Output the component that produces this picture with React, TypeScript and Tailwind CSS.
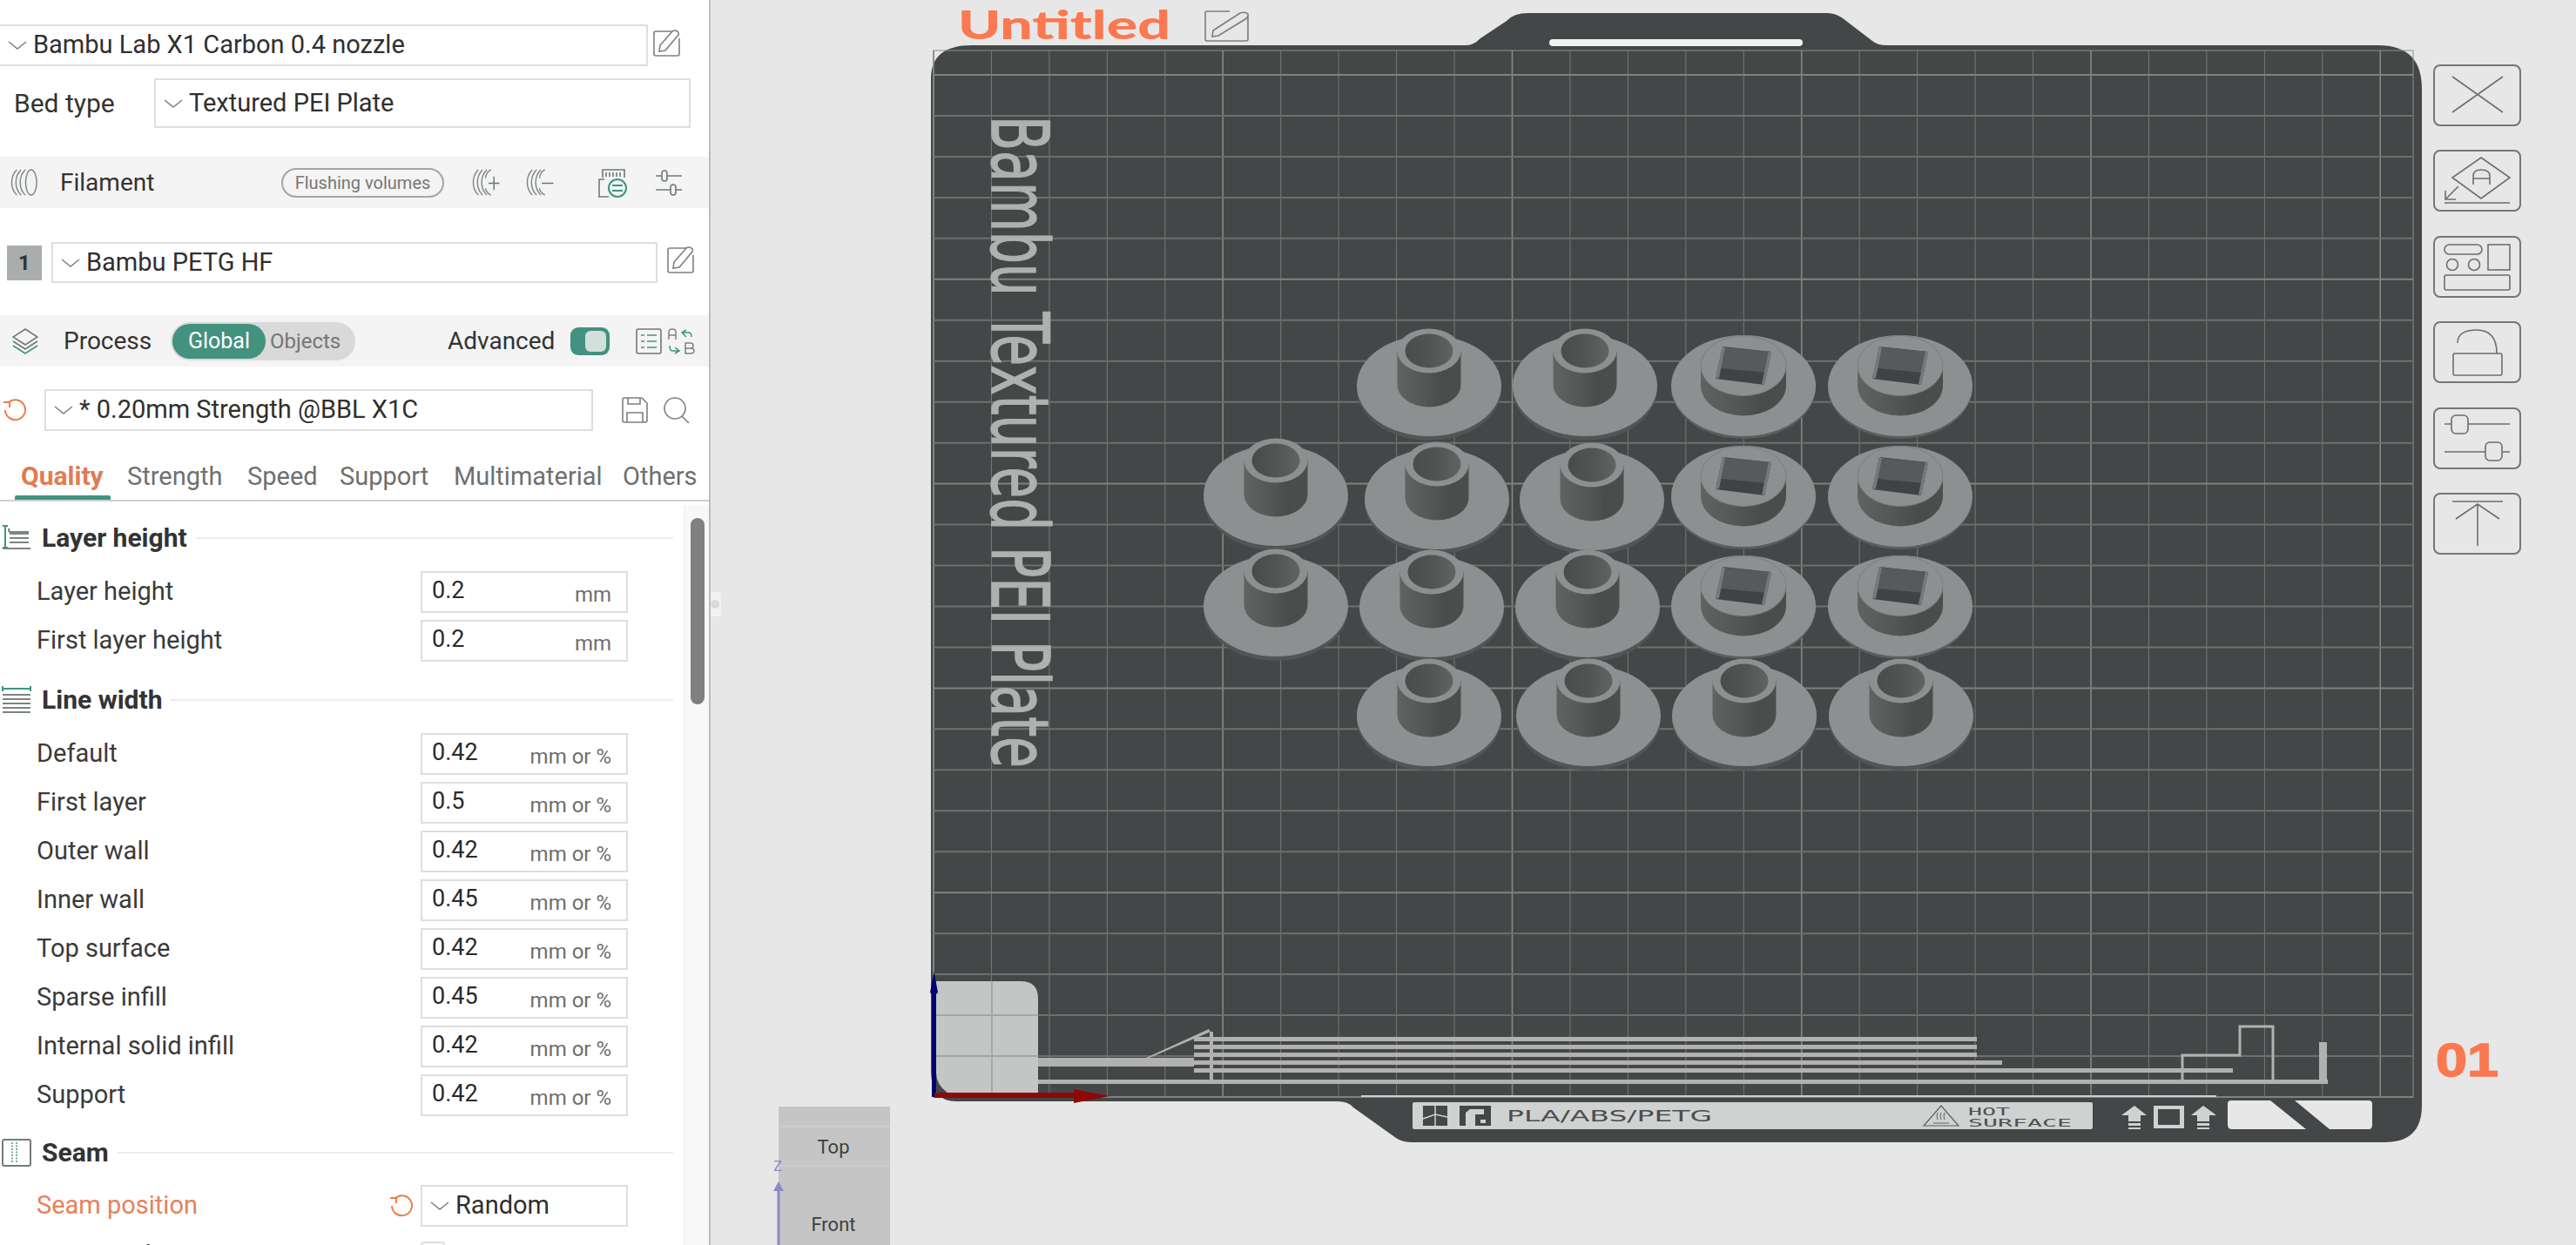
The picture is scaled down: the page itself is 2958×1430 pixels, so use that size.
import { Fragment } from 'react';

const SANS = "font-['Roboto','Noto_Sans',sans-serif]";

function Chevron({ className = '' }: { className?: string }) {
  return (
    <svg viewBox="0 0 22 12" className={`w-[22px] h-[12px] shrink-0 ${className}`} fill="none" stroke="#7d7d7d" strokeWidth="1.5">
      <path d="M1 2 L11 10 L21 2" />
    </svg>
  );
}

function Combo({ label, className = '' }: { label: string; className?: string }) {
  return (
    <div className={`flex items-center border-2 border-[#dedede] bg-white text-[29px] text-[#2f2f2f] ${className}`}>
      <Chevron className="ml-[9px] mr-[7px]" />
      <span className="whitespace-nowrap">{label}</span>
    </div>
  );
}

function EditIcon({ className = '' }: { className?: string }) {
  return (
    <svg viewBox="0 0 32 32" className={`w-[32px] h-[32px] shrink-0 ${className}`} fill="none" stroke="#7f7f7f" strokeWidth="1.6">
      <path d="M22 2 H3 Q1 2 1 4 V28 Q1 30 3 30 H28 Q30 30 30 28 V10" />
      <path d="M8 18 L22 2 Q25 0 28 2 Q30 4 29 6 L14 24 L7 25 Z" />
    </svg>
  );
}

function UndoIcon({ className = '' }: { className?: string }) {
  return (
    <svg viewBox="0 0 28 28" className={className} fill="none" stroke="#ef7b45" strokeWidth="2">
      <path d="M7 5 A11.5 11.5 0 1 1 3 14" />
      <path d="M1 5 H8 V11" />
    </svg>
  );
}

// three filament rings, optional sign on the right
function SpoolIcon({ plus, minus }: { plus?: boolean; minus?: boolean }) {
  const sign = plus || minus;
  return (
    <svg viewBox="0 0 32 34" className="w-[32px] h-[33px]" fill="none" stroke="#7c8785" strokeWidth="1.5">
      <path d="M7 2 Q1 8 1 17 Q1 26 7 32" />
      <path d="M12 2 Q6 8 6 17 Q6 26 12 32" />
      <path d="M17 2 Q11 8 11 17 Q11 26 17 32" />
      {sign ? (
        <path d="M22 2 Q16 5 15.5 12 M22 32 Q16 29 15.5 24" />
      ) : (
        <ellipse cx="24" cy="17" rx="6.5" ry="15" />
      )}
      {plus && <path d="M19 18 H32 M25.5 10 V26" stroke="#6a7775" />}
      {minus && <path d="M18 18 H32" stroke="#6a7775" />}
    </svg>
  );
}

function SectionTitle({ title, icon, className = '' }: { title: string; icon: 'layer' | 'line' | 'seam'; className?: string }) {
  return (
    <div className={`flex items-center h-[36px] ${className}`}>
      <div className="w-[48px] pl-[2px] shrink-0">
        {icon === 'layer' && (
          <svg viewBox="0 0 34 30" className="w-[34px] h-[30px]" fill="none">
            <path d="M9 4 Q7 6 9 8 H31 M9 10 H31 M9 15 H31 M9 20 H31 M1 27 H33" stroke="#7d8482" strokeWidth="2" />
            <path d="M1 1 H7 M4 1 V26 M1 26 H7" stroke="#3e9580" strokeWidth="2" />
          </svg>
        )}
        {icon === 'line' && (
          <svg viewBox="0 0 34 32" className="w-[34px] h-[32px]" fill="none">
            <path d="M1 10 H33 M1 15 H33 M1 20 H33 M1 25 H33 M1 30 H33" stroke="#7d8482" strokeWidth="2" />
            <path d="M1 0 V6 M1 3 H33 M33 0 V6" stroke="#3e9580" strokeWidth="2" />
          </svg>
        )}
        {icon === 'seam' && (
          <svg viewBox="0 0 34 32" className="w-[34px] h-[32px]" fill="none">
            <rect x="1" y="1" width="32" height="30" rx="2" stroke="#737b79" strokeWidth="2" />
            <path d="M12 4 V28 M17 4 V28" stroke="#3e9580" strokeWidth="1.5" strokeDasharray="2 1.5" />
          </svg>
        )}
      </div>
      <span className="text-[30px] font-bold text-[#333] whitespace-nowrap leading-none">{title}</span>
      <div className="ml-[10px] flex-1 h-[2px] bg-[#ececec] mr-[41px]" />
    </div>
  );
}

function SettingRow({ label, value, unit }: { label: string; value: string; unit: string }) {
  return (
    <div className="flex items-center h-[48px] mb-[8px] pl-[42px]">
      <span className="w-[441px] text-[29px] text-[#3a3a3a] whitespace-nowrap">{label}</span>
      <div className="flex items-center justify-between w-[238px] h-[48px] border-2 border-[#dedede] pl-[11px] pr-[17px]">
        <span className="text-[27px] text-[#2a2a2a] -mt-[4px]">{value}</span>
        <span className="text-[24px] text-[#6e6e6e] mt-[5px]">{unit}</span>
      </div>
    </div>
  );
}

const TABS = [
  { name: 'Strength', w: 'w-[138px]' },
  { name: 'Speed', w: 'w-[106px]' },
  { name: 'Support', w: 'w-[131px]' },
  { name: 'Multimaterial', w: 'w-[194px]' },
  { name: 'Others', w: 'w-[90px]' },
];

const SETTINGS: { title: string; icon: 'layer' | 'line'; unit: string; rows: [string, string][] }[] = [
  { title: 'Layer height', icon: 'layer', unit: 'mm', rows: [['Layer height', '0.2'], ['First layer height', '0.2']] },
  {
    title: 'Line width',
    icon: 'line',
    unit: 'mm or %',
    rows: [
      ['Default', '0.42'],
      ['First layer', '0.5'],
      ['Outer wall', '0.42'],
      ['Inner wall', '0.45'],
      ['Top surface', '0.42'],
      ['Sparse infill', '0.45'],
      ['Internal solid infill', '0.42'],
      ['Support', '0.42'],
    ],
  },
];

function LeftPanel() {
  return (
    <div className={`relative w-[816px] h-full shrink-0 bg-white border-r-2 border-[#bcbcbc] overflow-hidden ${SANS}`}>
      <div className="pt-[28px]">
        <div className="flex items-center h-[48px]">
          <Combo label="Bambu Lab X1 Carbon 0.4 nozzle" className="w-[744px] h-[48px] border-l-0 pl-0" />
          <EditIcon className="ml-[6px] -mt-[4px]" />
        </div>
        <div className="flex items-center h-[57px] mt-[14px]">
          <span className="w-[177px] pl-[16px] text-[30px] text-[#333]">Bed type</span>
          <Combo label="Textured PEI Plate" className="w-[616px] h-[57px]" />
        </div>
      </div>

      <div className="flex items-center h-[59px] mt-[33px] bg-[#f4f4f4] pl-[12px]">
        <SpoolIcon />
        <span className="ml-[25px] w-[254px] text-[28px] text-[#333]">Filament</span>
        <div className="flex items-center justify-center w-[187px] h-[34px] rounded-full border-2 border-[#a5a5a5] text-[20px] text-[#767676] leading-none">
          Flushing volumes
        </div>
        <div className="ml-[32px]"><SpoolIcon plus /></div>
        <div className="ml-[30px]"><SpoolIcon minus /></div>
        <svg viewBox="0 0 34 34" className="ml-[50px] w-[34px] h-[34px]" fill="none" stroke="#6f7a78" strokeWidth="1.6">
          <path d="M6 11 V2 H31 V11 M10 5 V10 M14 5 V10 M18 5 V10 M22 5 V10 M26 5 V10" />
          <path d="M8 13 H2 V33 H13" />
          <circle cx="23" cy="23" r="10" stroke="#3e9580" strokeWidth="2" />
          <path d="M17 20 H29 M17 26 H29" stroke="#3e9580" strokeWidth="2" />
        </svg>
        <svg viewBox="0 0 32 34" className="ml-[32px] w-[32px] h-[34px]" fill="none" stroke="#6f7a78" strokeWidth="1.6">
          <path d="M1 9 H8 M14 9 H31 M1 25 H18 M24 25 H31" />
          <rect x="8" y="3" width="6" height="12" rx="3" />
          <rect x="18" y="19" width="6" height="12" rx="3" />
        </svg>
      </div>

      <div className="flex items-center h-[47px] mt-[39px]">
        <div className="ml-[8px] w-[40px] h-[40px] bg-[#a9adad] flex items-center justify-center text-[24px] font-bold text-[#333]">1</div>
        <Combo label="Bambu PETG HF" className="ml-[11px] w-[696px] h-[47px]" />
        <EditIcon className="ml-[11px] -mt-[6px]" />
      </div>

      <div className="flex items-center h-[59px] mt-[37px] bg-[#f4f4f4] pl-[14px]">
        <svg viewBox="0 0 30 30" className="w-[30px] h-[30px]" fill="none" stroke="#6f7a78" strokeWidth="1.6">
          <path d="M15 1 L29 10 L15 19 L1 10 Z" />
          <path d="M1 15 L15 24 L29 15" />
          <path d="M1 20 L15 29 L29 20" stroke="#3e9580" />
        </svg>
        <span className="ml-[29px] w-[123px] text-[28px] text-[#333]">Process</span>
        <div className="flex items-center w-[212px] h-[44px] rounded-full bg-[#d9d9d9] pl-[2px]">
          <div className="flex items-center justify-center w-[107px] h-[40px] rounded-full bg-[#43917f] text-[25px] text-white">Global</div>
          <span className="ml-[5px] text-[24px] text-[#757575]">Objects</span>
        </div>
        <span className="ml-[106px] w-[141px] text-[28px] text-[#333]">Advanced</span>
        <div className="flex items-center justify-end w-[45px] h-[32px] rounded-[9px] bg-[#43917f] pr-[4px]">
          <div className="w-[24px] h-[24px] rounded-[6px] bg-[#d3dfdb]" />
        </div>
        <svg viewBox="0 0 30 30" className="ml-[30px] w-[30px] h-[30px]" fill="none" stroke="#6f7a78" strokeWidth="1.6">
          <rect x="1" y="1" width="28" height="28" rx="2" />
          <path d="M6 8 H10 M6 15 H10 M6 22 H10 M13 8 H24 M13 15 H24 M13 22 H24" stroke="#3e9580" />
        </svg>
        <svg viewBox="0 0 32 30" className="ml-[6px] w-[32px] h-[30px]" fill="none" stroke="#7a8280" strokeWidth="1.5">
          <path d="M2 13 V4 Q2 1 6 1 Q10 1 10 4 V13 M2 8 H10" />
          <path d="M22 10 L17 5 L22 2 M17 5 H25 Q28 5 28 10" stroke="#3e9580" />
          <path d="M9 22 L14 26 L9 29 M14 26 H6 Q3 26 3 20" stroke="#3e9580" />
          <path d="M21 17 H27 Q30 17 30 20 Q30 23 27 23 H21 Z M27 23 Q31 23 31 26 Q31 29 27 29 H21 V23" />
        </svg>
      </div>

      <div className="flex items-center h-[48px] mt-[26px]">
        <UndoIcon className="ml-[3px] w-[28px] h-[28px]" />
        <Combo label="* 0.20mm Strength @BBL X1C" className="ml-[20px] w-[630px] h-[48px]" />
        <svg viewBox="0 0 30 30" className="ml-[33px] w-[30px] h-[30px]" fill="none" stroke="#7f7f7f" strokeWidth="1.6">
          <path d="M1 3 Q1 1 3 1 H23 L29 7 V27 Q29 29 27 29 H3 Q1 29 1 27 Z" />
          <path d="M7 1 V8 H21 V1 M6 29 V18 H24 V29" />
        </svg>
        <svg viewBox="0 0 30 30" className="ml-[18px] w-[30px] h-[30px]" fill="none" stroke="#7f7f7f" strokeWidth="1.6">
          <circle cx="13" cy="13" r="12" />
          <path d="M21 22 L29 30" />
        </svg>
      </div>

      <div className="relative flex items-end h-[81px] pl-[24px] pb-[5px] border-b-2 border-[#d0d0d0] text-[29px] text-[#6f6f6f] whitespace-nowrap">
        <span className="w-[122px] text-[30px] font-bold text-[#e07b52]">Quality</span>
        {TABS.map((t) => (
          <span key={t.name} className={t.w}>{t.name}</span>
        ))}
        <div className="absolute left-[17px] bottom-0 w-[110px] h-[5px] rounded-t-[2px] bg-[#3e9580]" />
      </div>

      <div className="pt-[24px]">
        {SETTINGS.map((s, i) => (
          <Fragment key={s.title}>
            <SectionTitle title={s.title} icon={s.icon} className={i > 0 ? 'mt-[26px]' : ''} />
            <div className="mt-[20px]">
              {s.rows.map(([label, value]) => (
                <SettingRow key={label} label={label} value={value} unit={s.unit} />
              ))}
            </div>
          </Fragment>
        ))}
        <SectionTitle title="Seam" icon="seam" className="mt-[24px]" />
        <div className="flex items-center h-[48px] mt-[19px] pl-[42px]">
          <span className="w-[405px] text-[29px] text-[#e8815a]">Seam position</span>
          <UndoIcon className="w-[28px] h-[28px] mr-[8px]" />
          <Combo label="Random" className="w-[238px] h-[48px]" />
        </div>
        <div className="flex items-start h-[48px] mt-[17px] pl-[42px]">
          <span className="w-[441px] text-[29px] leading-[30px] text-[#3a3a3a] whitespace-nowrap">Staggered inner seams</span>
          <div className="w-[28px] h-[28px] border-2 border-[#dedede] rounded-[4px]" />
        </div>
      </div>

      {/* scroll track */}
      <div className="absolute right-0 top-[580px] bottom-0 w-[29px] bg-[#f8f8f8] border-l border-[#f0f0f0]">
        <div className="ml-[7px] mt-[15px] w-[16px] h-[214px] rounded-full bg-[#808080]" />
      </div>
    </div>
  );
}

// bed drawing uses page coordinates via viewBox
const GRID_X = Array.from({ length: 26 }, (_, i) => 1072 + i * 66.45);
const GRID_Y = Array.from({ length: 26 }, (_, i) => 86 + i * 46.96);

const PLATE_PATH =
  'M1116 52 H1684 Q1692 52 1700 44 L1730 24 Q1738 15 1755 15 H2098 Q2108 15 2116 21 L2150 47 Q2156 52 2166 52 H2731 Q2781 52 2781 102 V1270 Q2781 1312 2738 1312 H1622 Q1610 1312 1603 1307 L1554 1272 Q1548 1265 1536 1265 H1098 Q1069 1265 1069 1230 V90 Q1069 52 1116 52 Z';

function RoundPart({ x, y }: { x: number; y: number }) {
  return (
    <g transform={`translate(${x} ${y})`}>
      <ellipse cx="0" cy="4" rx="83" ry="59" fill="#525555" />
      <ellipse cx="0" cy="0" rx="83" ry="58" fill="#8c9090" />
      <path d="M-36.5 -40 V-1 A36.5 25.5 0 0 0 36.5 -1 V-40 Z" fill="url(#wall)" />
      <ellipse cx="0" cy="-40" rx="36.5" ry="25.5" fill="#8c9090" />
      <ellipse cx="0" cy="-40" rx="27.5" ry="19.5" fill="url(#hole)" />
    </g>
  );
}

function SquarePart({ x, y }: { x: number; y: number }) {
  return (
    <g transform={`translate(${x} ${y})`}>
      <ellipse cx="0" cy="2" rx="83" ry="59" fill="#5b5e5e" />
      <ellipse cx="0" cy="0" rx="83" ry="58" fill="#8c9090" />
      <path d="M-49 -23 V0 A49 34.5 0 0 0 49 0 V-23 Z" fill="url(#wall)" />
      <ellipse cx="0" cy="-23" rx="49" ry="34.5" fill="#8c9090" stroke="#7a7e7e" strokeWidth="1" />
      <polygon points="-24,-45 32,-39 24,-1 -32,-8" fill="#404344" />
      <polygon points="-21,-44 32,-39 27,-15 -26,-20" fill="#57595b" />
      <polygon points="-24,-45 -21,-44 -28,-9 -32,-8" fill="#777a7a" />
      <polygon points="32,-39 24,-1 21,-2 29,-39" fill="#777a7a" />
    </g>
  );
}

const ROUND_PARTS = [
  [1641, 443], [1820, 443],
  [1465, 569], [1650, 573], [1828, 574],
  [1465, 696], [1644, 697], [1823, 697],
  [1641, 822], [1824, 822], [2003, 822], [2183, 822],
];
const SQUARE_PARTS = [
  [2002, 443], [2182, 443],
  [2002, 570], [2182, 570],
  [2002, 696], [2182, 696],
];

function BedScene() {
  return (
    <svg viewBox="816 0 2142 1430" className="absolute inset-0 w-[2142px] h-[1430px]">
      <defs>
        <linearGradient id="wall" x1="0" x2="1" y1="0" y2="0">
          <stop offset="0" stopColor="#616363" />
          <stop offset="0.45" stopColor="#545656" />
          <stop offset="0.7" stopColor="#4a4c4c" />
          <stop offset="1" stopColor="#4c4e4e" />
        </linearGradient>
        <linearGradient id="hole" x1="0" x2="1" y1="0" y2="0">
          <stop offset="0" stopColor="#4a4c4c" />
          <stop offset="0.5" stopColor="#525454" />
          <stop offset="1" stopColor="#626464" />
        </linearGradient>
      </defs>

      <text x="1100" y="45" fontFamily="'Lato','Noto Sans',sans-serif" fontSize="46" fontWeight="900" fill="#fb7850" textLength="244" lengthAdjust="spacingAndGlyphs">Untitled</text>
      <g fill="none" stroke="#7c7c7c" strokeWidth="1.6">
        <path d="M1412 13 H1386 Q1384 13 1384 15 V45 Q1384 47 1386 47 H1431 Q1433 47 1433 45 V19" />
        <path d="M1393 35 L1424 15 Q1430 13 1433 16 Q1434 19 1430 22 L1399 41 L1392 42 Z" />
      </g>

      <path d={PLATE_PATH} fill="#434747" />
      <rect x="1779" y="45" width="291" height="8" rx="4" fill="#f1f1f1" />
      <rect x="1072" y="58" width="1699" height="1202" fill="none" stroke="#8d918e" strokeWidth="1" />
      {GRID_X.map((x, i) => (
        <line key={x} x1={x} x2={x} y1="58" y2="1260" stroke={i % 5 === 0 ? '#858a87' : '#767a78'} strokeWidth={i % 5 === 0 ? 1.6 : 1} />
      ))}
      {GRID_Y.map((y, i) => (
        <line key={y} x1="1072" x2="2771" y1={y} y2={y} stroke={i % 5 === 0 ? '#7f8380' : '#6c706e'} strokeWidth="2" />
      ))}

      {/* rotated plate label */}
      <text transform="translate(1139 133) rotate(90)" fontFamily="'DejaVu Sans',sans-serif" fontSize="90" fill="#afb1ae" stroke="#afb1ae" strokeWidth="1.5" textLength="749" lengthAdjust="spacingAndGlyphs">
        Bambu Textured PEI Plate
      </text>

      {/* excluded area + purge lines */}
      <path d="M1075 1127 H1172 Q1192 1127 1192 1147 V1255 H1088 Q1075 1246 1075 1232 Z" fill="#c4c6c5" />
      <line x1="1139" x2="1139" y1="1127" y2="1255" stroke="#9a9c9b" strokeWidth="1.5" />
      <line x1="1075" x2="1192" y1="1166" y2="1166" stroke="#a4a6a5" strokeWidth="2" />
      <line x1="1075" x2="1192" y1="1213" y2="1213" stroke="#a4a6a5" strokeWidth="2" />
      <g fill="#b1b2b0">
        <rect x="1192" y="1215" width="179" height="10" />
        <rect x="1192" y="1240" width="1481" height="5" />
        <rect x="1371" y="1191" width="899" height="5" />
        <rect x="1371" y="1200" width="899" height="5" />
        <rect x="1371" y="1209" width="899" height="5" />
        <rect x="1371" y="1218" width="928" height="5" />
        <rect x="1371" y="1227" width="1193" height="5" />
        <rect x="1389" y="1185" width="4" height="56" />
        <rect x="2663" y="1197" width="9" height="47" />
        <polygon points="1316,1215 1320,1215 1390,1185 1388,1182" />
      </g>
      <path d="M2506 1240 V1212 H2572 V1179 H2610 V1240" fill="none" stroke="#b1b2b0" strokeWidth="3" />
      <line x1="1563" x2="2545" y1="1259" y2="1259" stroke="#cfd1d0" strokeWidth="2" />

      {ROUND_PARTS.map(([x, y]) => <RoundPart key={`${x}-${y}`} x={x} y={y} />)}
      {SQUARE_PARTS.map(([x, y]) => <SquarePart key={`${x}-${y}`} x={x} y={y} />)}

      {/* axes */}
      <rect x="1070" y="1140" width="5" height="120" fill="#00006e" />
      <polygon points="1072.5,1116 1068,1140 1072.5,1144 1077,1140" fill="#00006e" />
      <rect x="1073" y="1255" width="160" height="6" fill="#8e0808" />
      <polygon points="1233,1251 1274,1259 1233,1267" fill="#8e0808" />

      {/* plate label strip */}
      <rect x="1622" y="1266" width="781" height="31" fill="#d0d2d1" rx="2" />
      <rect x="1634" y="1270" width="28" height="23" fill="#434747" />
      <path d="M1648 1270 V1293 M1634 1285 L1648 1280 L1662 1283" fill="none" stroke="#d0d2d1" strokeWidth="1.5" />
      <rect x="1676" y="1270" width="36" height="23" fill="#434747" />
      <path d="M1683 1293 V1278 L1688 1274 H1704 V1280 H1694 V1293 Z" fill="#d0d2d1" />
      <rect x="1700" y="1286" width="6" height="4" fill="#d0d2d1" />
      <text x="1730" y="1288" fontFamily="'DejaVu Sans',sans-serif" fontSize="18" fill="#4a4d4d" textLength="236" lengthAdjust="spacingAndGlyphs">PLA/ABS/PETG</text>
      <path d="M2229 1270 L2249 1293 H2209 Z M2220 1290 H2238" fill="none" stroke="#5d6060" strokeWidth="1.2" />
      <path d="M2225 1278 Q2223 1282 2225 1286 M2229 1278 Q2227 1282 2229 1286 M2233 1278 Q2231 1282 2233 1286" fill="none" stroke="#5d6060" strokeWidth="1" />
      <text x="2260" y="1281" fontFamily="'DejaVu Sans Mono',monospace" fontSize="13" fill="#4d5050" textLength="48" lengthAdjust="spacingAndGlyphs">HOT</text>
      <text x="2260" y="1294" fontFamily="'DejaVu Sans Mono',monospace" fontSize="13" fill="#4d5050" textLength="119" lengthAdjust="spacingAndGlyphs">SURFACE</text>

      <g fill="#d0d2d1">
        <path d="M2451 1270 L2436 1281 H2444 V1288 H2458 V1281 H2465 Z M2444 1290 H2458 V1293 H2444 Z M2444 1295 H2458 V1297 H2444 Z" />
        <path d="M2530 1270 L2516 1281 H2523 V1288 H2537 V1281 H2545 Z M2523 1290 H2537 V1293 H2523 Z M2523 1295 H2537 V1297 H2523 Z" />
        <path fillRule="evenodd" d="M2473 1270 H2508 V1296 H2473 Z M2478 1274 V1292 H2503 V1274 Z" />
      </g>
      <path d="M2562 1264 H2607 L2648 1297 H2563 Q2558 1297 2558 1292 V1268 Q2558 1264 2562 1264 Z" fill="#e7e7e7" />
      <path d="M2635 1264 H2720 Q2724 1264 2724 1268 V1292 Q2724 1297 2720 1297 H2675 Z" fill="#e7e7e7" />

      <text x="2797" y="1236" fontFamily="'Liberation Sans',sans-serif" fontSize="54" fontWeight="700" fill="#fb7850" stroke="#fb7850" strokeWidth="1.5" textLength="72" lengthAdjust="spacingAndGlyphs">01</text>

      {/* view cube */}
      <rect x="894" y="1271" width="128" height="159" fill="#c5c5c5" />
      <line x1="894" x2="1022" y1="1294" y2="1294" stroke="#d4d4d4" />
      <line x1="894" x2="1022" y1="1339" y2="1339" stroke="#d4d4d4" />
      <text x="957" y="1325" textAnchor="middle" fontFamily="'Roboto',sans-serif" fontSize="22" fill="#3f3f3f">Top</text>
      <text x="957" y="1414" textAnchor="middle" fontFamily="'Roboto',sans-serif" fontSize="22" fill="#3f3f3f">Front</text>
      <line x1="894" x2="894" y1="1365" y2="1430" stroke="#8b8bc8" strokeWidth="3" />
      <polygon points="894,1357 888,1368 900,1368" fill="#8b8bc8" />
      <text x="893" y="1345" textAnchor="middle" fontFamily="'Roboto',sans-serif" fontSize="16" fill="#8b8bc8">Z</text>
    </svg>
  );
}

function ToolButton({ children }: { children: React.ReactNode }) {
  return (
    <div className="w-[101px] h-[71px] rounded-[8px] border-2 border-[#767676]">
      <svg viewBox="2 2 97 67" className="w-[97px] h-[67px]" fill="none" stroke="#6e6e6e" strokeWidth="1.6">
        {children}
      </svg>
    </div>
  );
}

function Toolbar() {
  return (
    <div className="absolute left-[1978px] top-[74px] flex flex-col gap-[27.4px]">
      <ToolButton>
        <path d="M22 14 L80 55 M80 14 L22 55" />
      </ToolButton>
      <ToolButton>
        <path d="M55 9 L88 32 L55 56 L22 32 Z" />
        <path d="M46 40 V30 Q46 23 55 23 Q65 23 65 30 V40 M46 33 H65" />
        <path d="M29 42 L14 57 M14 47 V57 H26 M13 61 H88" />
      </ToolButton>
      <ToolButton>
        <rect x="13" y="10" width="43" height="11" rx="5.5" />
        <circle cx="22" cy="33" r="6.5" />
        <circle cx="47" cy="33" r="6.5" />
        <rect x="63" y="10" width="25" height="29" />
        <rect x="13" y="45" width="75" height="17" rx="2" />
      </ToolButton>
      <ToolButton>
        <rect x="23" y="37" width="56" height="25" rx="2" />
        <path d="M28 25 Q28 10 50 10 Q73 10 73 37" />
      </ToolButton>
      <ToolButton>
        <path d="M13 19 H21 M40 19 H88 M13 51 H60 M79 51 H88" />
        <rect x="21" y="9" width="19" height="21" rx="5" />
        <rect x="60" y="40" width="19" height="21" rx="5" />
      </ToolButton>
      <ToolButton>
        <path d="M22 10 H80 M51 13 V61 M26 30 L51 13 L76 30" />
      </ToolButton>
    </div>
  );
}

export default function App() {
  return (
    <div className="flex w-[2958px] h-[1430px] overflow-hidden bg-[#e7e7e7]">
      <LeftPanel />
      <div className="relative flex-1 h-full bg-[#e7e7e7]">
        <BedScene />
        <Toolbar />
        <div className="absolute left-[0px] top-[680px] w-[12px] h-[28px] rounded-r-[4px] bg-[#f2f2f2] flex items-center">
          <div className="w-[10px] h-[10px] rounded-full bg-[#d9d9d9]" />
        </div>
      </div>
    </div>
  );
}
